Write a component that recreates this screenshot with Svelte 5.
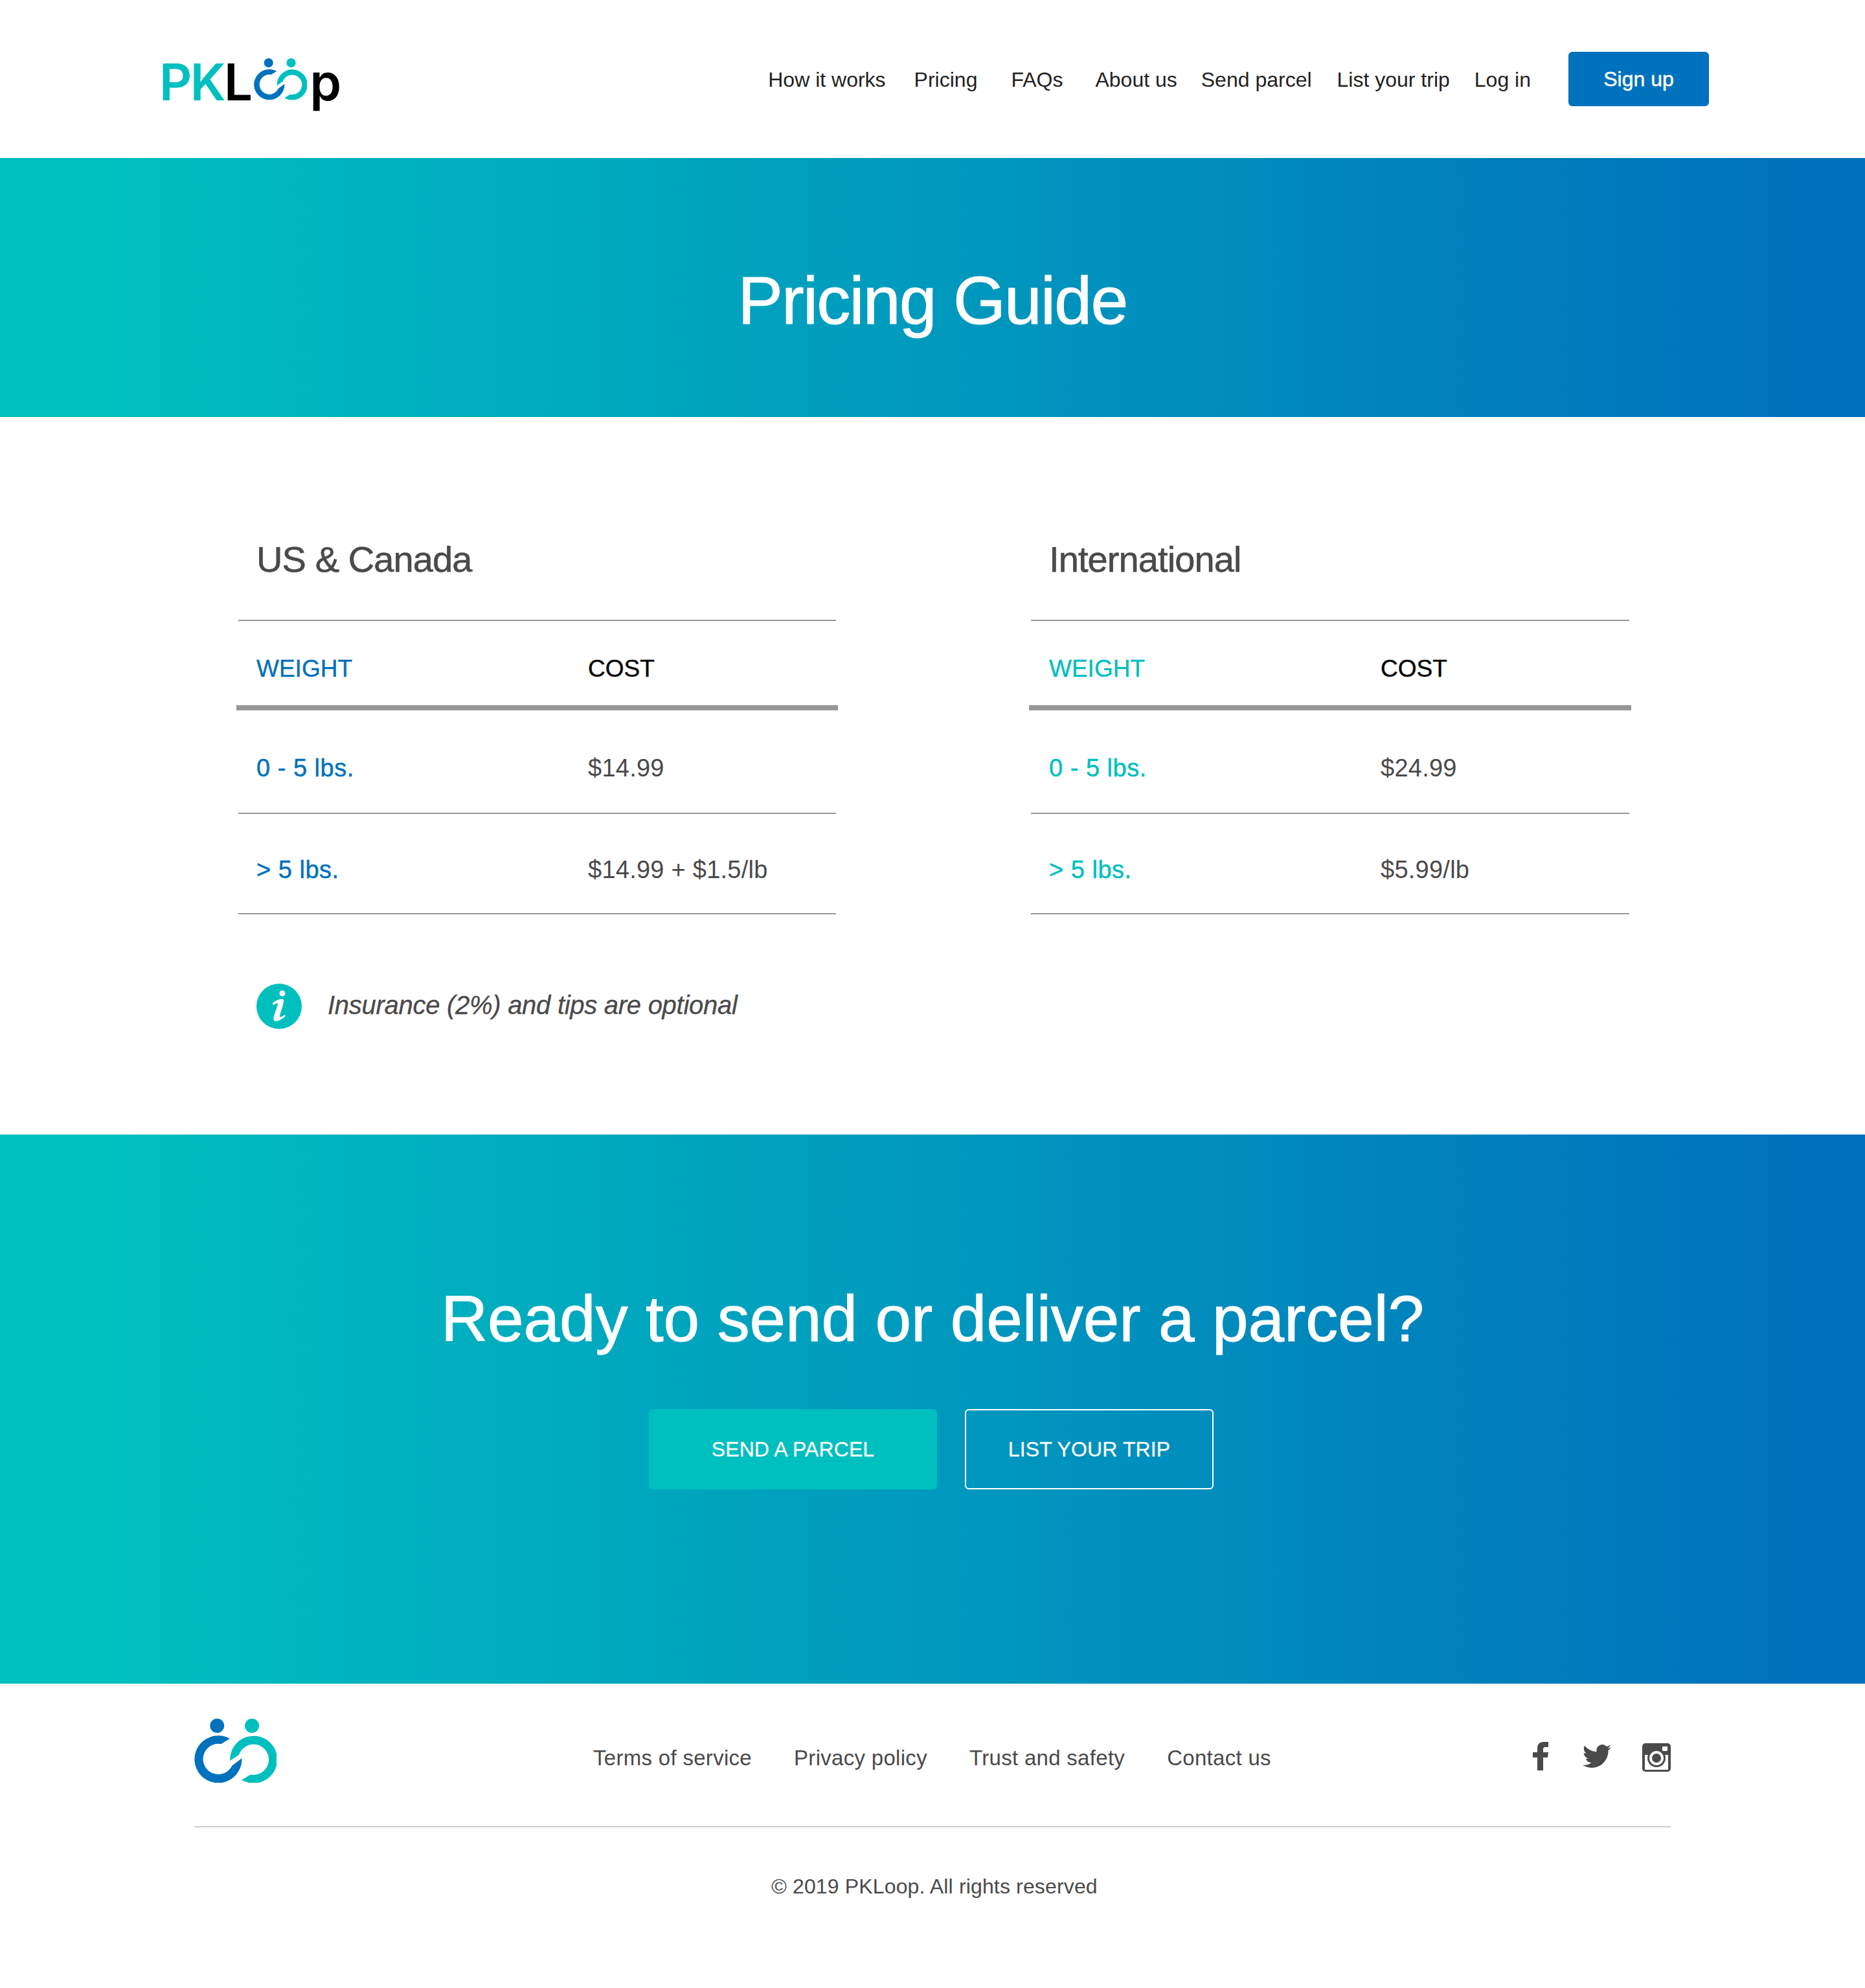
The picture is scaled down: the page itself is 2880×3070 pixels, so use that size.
<script>
	const navLinks = ['How it works', 'Pricing', 'FAQs', 'About us', 'Send parcel', 'List your trip', 'Log in'];
	const footerLinks = ['Terms of service', 'Privacy policy', 'Trust and safety', 'Contact us'];

	const tables = [
		{
			title: 'US & Canada',
			accent: 'blue',
			rows: [
				['0 - 5 lbs.', '$14.99'],
				['> 5 lbs.', '$14.99 + $1.5/lb']
			]
		},
		{
			title: 'International',
			accent: 'teal',
			rows: [
				['0 - 5 lbs.', '$24.99'],
				['> 5 lbs.', '$5.99/lb']
			]
		}
	];
</script>

{#snippet mark(cls)}
	<svg class={cls} viewBox="60 72 380 298" aria-hidden="true">
		<circle cx="165" cy="105" r="33" fill="#0071bc" />
		<circle cx="327" cy="105" r="33" fill="#00bfbf" />
		<path fill="#0071bc" d="M224 165A110 110 0 1 0 280 256L235 290A71 71 0 1 1 183 190Z" />
		<path fill="#00bfbf" d="M279 357A110 110 0 1 0 225 268L267 240A71 71 0 1 1 320 332Z" />
	</svg>
{/snippet}

<header class="topbar">
	<a class="logo" href="#home"><span class="pk">PK</span>L{@render mark('logo-mark')}p</a>
	<nav class="nav">
		{#each navLinks as link}
			<a href="#nav">{link}</a>
		{/each}
	</nav>
	<a class="signup" href="#signup">Sign up</a>
</header>

<section class="hero">
	<h1>Pricing Guide</h1>
</section>

<main class="pricing">
	<div class="tables">
		{#each tables as table}
			<div class="table {table.accent}">
				<h2>{table.title}</h2>
				<div class="row head">
					<span class="weight">WEIGHT</span>
					<span class="cost">COST</span>
				</div>
				{#each table.rows as row}
					<div class="row">
						<span class="weight strong">{row[0]}</span>
						<span class="price">{row[1]}</span>
					</div>
				{/each}
			</div>
		{/each}
	</div>
	<div class="note">
		<svg class="info" viewBox="0 0 70 70" aria-hidden="true">
			<circle cx="35" cy="35" r="35" fill="#00bfbf" />
			<circle cx="40" cy="15" r="4.5" fill="#fff" />
			<path fill="#fff" d="M25 30C30 26 36 23 41 24C43 25 42 29 41 33L36 49C35.500 52 37 52 39 51L44 48L45 50C41 54 35 58 29 58C26 57 26 54 27 50L33 32C33 30 32 30 30 31L26 33Z" />
		</svg>
		<em>Insurance (2%) and tips are optional</em>
	</div>
</main>

<section class="cta">
	<h2>Ready to send or deliver a parcel?</h2>
	<div class="cta-actions">
		<a class="btn solid" href="#send">SEND A PARCEL</a>
		<a class="btn outline" href="#trip">LIST YOUR TRIP</a>
	</div>
</section>

<footer class="footer">
	<div class="footer-top">
		{@render mark('footer-mark')}
		<nav class="footer-links">
			{#each footerLinks as link}
				<a href="#footer">{link}</a>
			{/each}
		</nav>
		<div class="social">
			<svg class="fb" viewBox="0 0 24 44" aria-hidden="true">
				<path d="M7 44V24H0V16H7V10C7 3 11 0 17 0H24V8H19C16.500 8 16 9.500 16 11V16H24L23 24H16V44Z" />
			</svg>
			<svg class="tw" viewBox="0 0 24 24" aria-hidden="true">
				<path d="M23.953 4.57a10 10 0 01-2.825.775 4.958 4.958 0 002.163-2.723c-.951.555-2.005.959-3.127 1.184a4.92 4.92 0 00-8.384 4.482C7.69 8.095 4.067 6.13 1.64 3.162a4.822 4.822 0 00-.666 2.475c0 1.71.87 3.213 2.188 4.096a4.904 4.904 0 01-2.228-.616v.06a4.923 4.923 0 003.946 4.827 4.996 4.996 0 01-2.212.085 4.936 4.936 0 004.604 3.417 9.867 9.867 0 01-6.102 2.105c-.39 0-.779-.023-1.17-.067a13.995 13.995 0 007.557 2.209c9.053 0 13.998-7.496 13.998-13.985 0-.21 0-.42-.015-.63A9.935 9.935 0 0024 4.59z" />
			</svg>
			<svg class="ig" viewBox="0 0 44 44" aria-hidden="true">
				<rect width="44" height="44" rx="5" fill="#4a4a4a" />
				<rect x="4" y="18" width="36" height="23" rx="1" fill="#fff" />
				<circle cx="22" cy="23" r="14" fill="#4a4a4a" />
				<circle cx="22" cy="23" r="11" fill="#fff" />
				<circle cx="22" cy="23" r="7" fill="#4a4a4a" />
				<rect x="31" y="5" width="8" height="7" rx="1" fill="#fff" />
			</svg>
		</div>
	</div>
	<p class="copyright">© 2019 PKLoop. All rights reserved</p>
</footer>

<style>
	:global(body) {
		margin: 0;
		background: #fff;
		font-family: 'Liberation Sans', Arial, sans-serif;
		color: #4a4a4a;
	}

	a {
		text-decoration: none;
		color: inherit;
	}

	h1,
	h2,
	p {
		margin: 0;
		font-weight: 400;
	}

	.topbar {
		height: 244px;
		box-sizing: border-box;
		padding: 80px 241px 0 246px;
		display: flex;
		align-items: flex-start;
	}

	.logo {
		display: flex;
		align-items: baseline;
		font-family: Inter, 'Liberation Sans', sans-serif;
		font-weight: 600;
		font-size: 78px;
		line-height: 94px;
		letter-spacing: -2.6px;
		color: #000;
	}

	.pk {
		color: #00bfbf;
	}

	.logo-mark {
		width: 82px;
		height: 64px;
		margin: 10px 4px 0 5px;
		align-self: flex-start;
	}

	.nav {
		margin-left: auto;
		display: flex;
		font-size: 32px;
		line-height: 86px;
		color: #222;
	}

	.nav a:nth-child(1) {
		margin-right: 44px;
	}
	.nav a:nth-child(2) {
		margin-right: 52px;
	}
	.nav a:nth-child(3) {
		margin-right: 50px;
	}
	.nav a:nth-child(4) {
		margin-right: 37px;
	}
	.nav a:nth-child(5) {
		margin-right: 39px;
	}
	.nav a:nth-child(6) {
		margin-right: 38px;
	}

	.signup {
		margin-left: 58px;
		width: 217px;
		height: 84px;
		background: #0071bc;
		border-radius: 6px;
		color: #fff;
		font-size: 32px;
		font-weight: 400;
		-webkit-text-stroke: 0.5px #fff;
		display: flex;
		align-items: center;
		justify-content: center;
	}

	.hero,
	.cta {
		background: linear-gradient(90deg, #00bfbf 6%, #0071bc 97%);
		color: #fff;
		text-align: center;
	}

	.hero {
		height: 400px;
		box-sizing: border-box;
		padding-top: 40px;
		display: flex;
		align-items: center;
		justify-content: center;
	}

	.hero h1 {
		font-size: 104px;
		letter-spacing: -1.8px;
		-webkit-text-stroke: 1px #fff;
	}

	.pricing {
		height: 1108px;
		box-sizing: border-box;
		padding: 0 365px 0 365px;
	}

	.tables {
		display: grid;
		grid-template-columns: 929px 930px;
		column-gap: 295px;
	}

	.table h2 {
		height: 315px;
		box-sizing: border-box;
		padding: 188px 0 0 28px;
		margin: 0 3px;
		font-size: 56px;
		line-height: 64px;
		letter-spacing: -0.9px;
		-webkit-text-stroke: 0.6px #4a4a4a;
		border-bottom: 2px solid #979797;
	}

	.row {
		box-sizing: border-box;
		height: 160px;
		margin: 0 3px;
		padding: 20px 0 0 28px;
		display: flex;
		align-items: center;
		border-bottom: 2px solid #979797;
		font-size: 38px;
	}

	.row:last-child {
		height: 155px;
	}

	.row.head {
		height: 138px;
		margin: 0;
		padding: 18px 0 0 31px;
		border-bottom: 8px solid #979797;
		font-size: 37px;
	}

	.weight {
		width: 512px;
	}

	.strong {
		letter-spacing: 0.5px;
		-webkit-text-stroke: 0.5px currentColor;
	}

	.price {
		letter-spacing: 0.25px;
	}

	.blue .weight {
		color: #0071bc;
	}

	.teal .weight {
		color: #00bfbf;
	}

	.head .weight,
	.cost {
		-webkit-text-stroke: 0.4px currentColor;
	}

	.cost {
		color: #000;
	}

	.note {
		margin-top: 107px;
		padding-left: 31px;
		display: flex;
		align-items: center;
		gap: 40px;
		font-size: 40px;
		letter-spacing: -0.28px;
	}

	.note em {
		margin-bottom: 3px;
		-webkit-text-stroke: 0.3px #4a4a4a;
	}

	.info {
		width: 70px;
		height: 70px;
	}

	.cta {
		height: 848px;
		box-sizing: border-box;
		padding-top: 224px;
	}

	.cta h2 {
		font-size: 100px;
		line-height: 120px;
		letter-spacing: -0.15px;
		-webkit-text-stroke: 1px #fff;
	}

	.cta-actions {
		margin-top: 80px;
		padding-right: 4px;
		display: flex;
		justify-content: center;
		gap: 43px;
		font-size: 32px;
		letter-spacing: 0.1px;
		-webkit-text-stroke: 0.3px #fff;
		color: #fff;
	}

	.btn {
		height: 124px;
		box-sizing: border-box;
		border-radius: 6px;
		display: flex;
		align-items: center;
		justify-content: center;
	}

	.solid {
		width: 445px;
		background: #00bfbf;
	}

	.outline {
		width: 384px;
		border: 2px solid #fff;
	}

	.footer {
		height: 470px;
		box-sizing: border-box;
		padding: 54px 300px 0;
	}

	.footer-top {
		height: 168px;
		box-sizing: border-box;
		border-bottom: 2px solid #ccc;
		display: flex;
		align-items: flex-start;
	}

	.footer-mark {
		width: 127px;
		height: 99px;
	}

	.footer-links {
		margin-left: 489px;
		margin-top: 42px;
		display: flex;
		gap: 65px;
		font-size: 33px;
		line-height: 38px;
		letter-spacing: 0.3px;
	}

	.social {
		margin-left: auto;
		margin-top: 36px;
		display: flex;
		align-items: flex-start;
		fill: #4a4a4a;
	}

	.fb {
		width: 24px;
		height: 44px;
	}

	.tw {
		width: 44px;
		height: 44px;
		margin-left: 53px;
	}

	.ig {
		width: 44px;
		height: 44px;
		margin-left: 48px;
		margin-top: 2px;
	}

	.copyright {
		margin-top: 72px;
		padding-left: 6px;
		text-align: center;
		font-size: 32px;
		line-height: 38px;
		letter-spacing: 0.15px;
	}
</style>
